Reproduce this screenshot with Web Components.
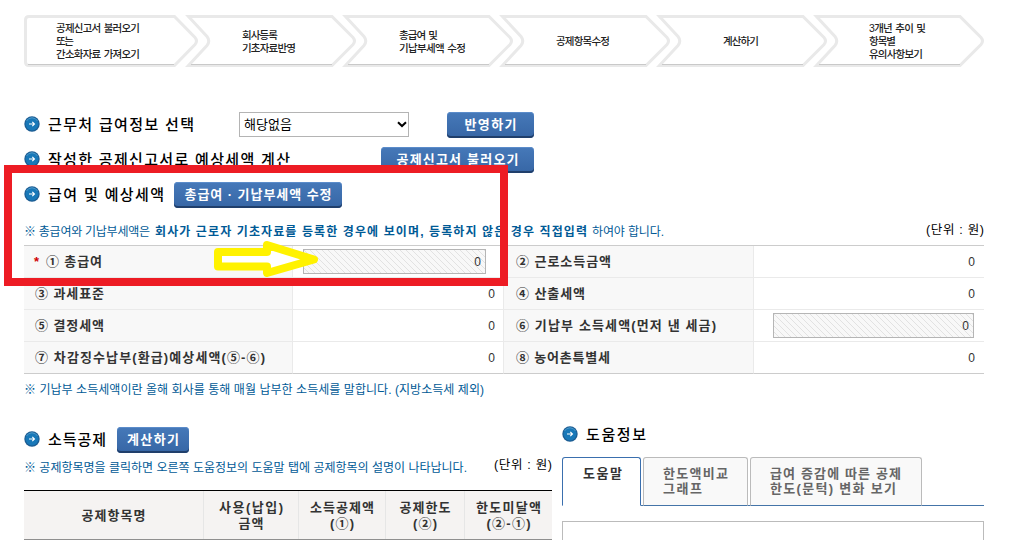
<!DOCTYPE html>
<html lang="ko">
<head>
<meta charset="utf-8">
<title>예상세액 계산하기</title>
<style>
  body {
    margin: 0;
    background: #fff;
    color: #000;
    font: 12px/16px "Liberation Sans", "Noto Sans CJK KR", sans-serif;
  }
</style>
</head>
<body>
<tax-page></tax-page>

<script>
// Attach an open shadow root filled with the given markup
function shadow(el, html) {
  const template = document.createElement("template");
  template.innerHTML = html;
  el.attachShadow({ mode: "open" });
  el.shadowRoot.appendChild(template.content.cloneNode(true));
}

// One arrow of the process bar
class ProcessStep extends HTMLElement {
  connectedCallback() {
    const first = this.hasAttribute("first");
    const outline = first
      ? "M5 1.5H150.5L171 22.5Q174 26 171 29.5L150.5 50.5H5Q1.5 50.5 1.5 47V5Q1.5 1.5 5 1.5Z"
      : "M3.5 1.5H147L168 22.5Q171 26 168 29.5L147 50.5H3.5L22 30.5Q25.500 26 22 21.500Z";
    shadow(this, `
      <style>
        :host { display: grid; height: 52px; align-items: center; color: #222; }
        svg, .label { grid-area: 1 / 1; }
        svg { width: 100%; height: 52px; overflow: visible; }
        .label {
          display: flex;
          flex-direction: column;
          align-items: flex-start;
          padding: 1px 0 0 ${this.getAttribute("indent")}px;
          font-size: 10.500px;
          line-height: 13px;
          font-weight: 500;
          word-spacing: 1px;
        }
      </style>
      <svg>
        <path d="${outline}" fill="#fff" stroke="#e9e9e9" stroke-width="3"/>
        <path d="M${first ? 4 : 6} 49.500H${first ? 150 : 147}" stroke="#c9c9c9"/>
      </svg>
      <div class="label"><slot></slot></div>
    `);
  }
}

// Section title with the round blue bullet
class SectionTitle extends HTMLElement {
  connectedCallback() {
    shadow(this, `
      <style>
        :host { display: flex; align-items: center; height: 35px; }
        svg { flex: none; margin: -1px 8px 0 0; }
        .text { font-size: 15px; line-height: 20px; font-weight: 500; }
        .extra { display: flex; align-items: center; flex: 1; }
      </style>
      <svg width="16" height="16" viewBox="0 0 16 16">
        <circle cx="8" cy="8" r="7.700" fill="#1c5c92"/>
        <circle cx="8" cy="8" r="6.500" fill="#1878b8"/>
        <path d="M2.500 5A6.300 6.300 0 0 1 13.500 5" fill="none" stroke="#4f9bcb"/>
        <path d="M5 8H10.500M8.300 5.800L10.500 8L8.300 10.200" fill="none" stroke="#fff" stroke-width="1.100"/>
      </svg>
      <div class="text"><slot></slot></div>
      <div class="extra"><slot name="extra"></slot></div>
    `);
  }
}

class BlueButton extends HTMLElement {
  connectedCallback() {
    shadow(this, `
      <style>
        :host { display: block; flex: none; }
        button {
          display: flex;
          justify-content: center;
          width: 100%;
          height: 26px;
          padding: 4px 0 0;
          border: 0;
          border-radius: 4px;
          background: linear-gradient(#4679b9, #3766a5);
          box-shadow: inset 0 1px #5b8cca, inset 0 -2px #203f6b;
          color: #fff;
          font: bold 13px/17px "Liberation Sans", "Noto Sans CJK KR", sans-serif;
        }
      </style>
      <button type="button"><slot></slot></button>
    `);
  }
}

class SelectBox extends HTMLElement {
  connectedCallback() {
    shadow(this, `
      <style>
        :host {
          display: flex;
          align-items: center;
          justify-content: space-between;
          box-sizing: border-box;
          width: 170px;
          height: 25px;
          padding: 0 1px 0 4px;
          border: 1px solid #b4b4b4;
          background: #fff;
          font-size: 13px;
        }
      </style>
      <slot></slot>
      <svg width="10" height="7"><path d="M1 1.200L5 5L9 1.200" fill="none" stroke="#000" stroke-width="2"/></svg>
    `);
  }
}

// Line of blue help text, with an optional unit on the right
class NoteLine extends HTMLElement {
  connectedCallback() {
    shadow(this, `
      <style>
        :host { display: flex; justify-content: space-between; color: #005a96; }
        .text { display: flex; gap: 5px; padding-top: 1px; }
        .unit { color: #000; font-size: 12.500px; }
        ::slotted(b) { font-weight: bold; }
      </style>
      <div class="text"><slot></slot></div>
      <div class="unit"><slot name="unit"></slot></div>
    `);
  }
}

class AmountTable extends HTMLElement {
  connectedCallback() {
    shadow(this, `
      <style>
        :host {
          display: grid;
          grid-template-columns: 269px 211px 250px 230px;
          grid-auto-rows: 32px;
          border-top: 1px solid #ccc;
        }
      </style>
      <slot></slot>
    `);
  }
}

// Label cell and value cell of the amount table
class AmountItem extends HTMLElement {
  connectedCallback() {
    const field = this.getAttribute("field");
    const last = this.hasAttribute("last");
    const right = this.hasAttribute("right");
    shadow(this, `
      <style>
        :host { display: contents; }
        .label, .value {
          display: flex;
          align-items: center;
          box-sizing: border-box;
          border-bottom: 1px solid ${last ? "#ccc" : "#eaeaea"};
          border-right: 1px solid #eaeaea;
        }
        .label {
          padding: 0 0 0 ${right ? 12 : 11}px;
          background: #f8f8f8;
          color: #333;
          font-size: 13px;
          font-weight: bold;
        }
        .required { width: 12px; margin-left: -1px; color: #d00000; }
        .value { justify-content: flex-end; padding-right: 8px; color: #333; }
        .value span { padding-top: 1px; }
        :host([right]) .value { border-right: 0; padding-right: 9px; }
        :host([field]) .value { padding-right: 17px; }
        :host([field][right]) .value { padding-right: 10px; }
        .field {
          display: flex;
          align-items: center;
          justify-content: flex-end;
          box-sizing: border-box;
          width: ${field}px;
          height: 25px;
          padding-right: 4px;
          border: 1px solid #b5b5b5;
          background: repeating-linear-gradient(45deg, #f8f8f8 0 3.200px, #e2e2e2 3.200px 4.240px);
        }
      </style>
      <div class="label">
        ${this.hasAttribute("required") ? '<span class="required">*</span>' : ""}
        <slot></slot>
      </div>
      <div class="value">${field ? '<div class="field">0</div>' : "<span>0</span>"}</div>
    `);
  }
}

class DeductionHead extends HTMLElement {
  connectedCallback() {
    shadow(this, `
      <style>
        :host {
          display: grid;
          grid-template-columns: 180px 95px 87px 79px 87px;
          box-sizing: border-box;
          height: 50px;
          border-top: 1px solid #000;
          border-bottom: 1px solid #8f8f8f;
          background: #f5f3f2;
          color: #333;
          font-size: 13px;
          font-weight: bold;
        }
        ::slotted(div) {
          display: flex;
          flex-direction: column;
          align-items: center;
          justify-content: center;
          padding-top: 1px;
          border-right: 1px solid #e6e6e6;
        }
        ::slotted(div:last-child) { border-right: 0; }
      </style>
      <slot></slot>
    `);
  }
}

class TabItem extends HTMLElement {
  connectedCallback() {
    shadow(this, `
      <style>
        :host {
          display: flex;
          flex-direction: column;
          align-items: flex-start;
          box-sizing: border-box;
          height: 49px;
          padding: 8px 0 0 19px;
          border: 1px solid #bbb;
          border-bottom: 1px solid #4474a8;
          border-radius: 3px 3px 0 0;
          background: #f9f9f9;
          color: #666;
          font-size: 13px;
          line-height: 15px;
          font-weight: bold;
        }
        :host([active]) {
          padding-left: 20px;
          border-color: #3a6fae;
          border-bottom-color: #fff;
          background: #fff;
          color: #333;
        }
      </style>
      <slot></slot>
    `);
  }
}

// Red frame and yellow arrow drawn over the page
class MarkOverlay extends HTMLElement {
  connectedCallback() {
    shadow(this, `
      <style>
        :host { position: absolute; left: 4px; top: 165px; pointer-events: none; }
        svg { display: block; }
      </style>
      <svg width="504" height="121" viewBox="4 165 504 121">
        <path d="M218 252H267V245L314 259.500L267 273V266.500H218Z" fill="#fff"
          stroke="#fff200" stroke-width="8" stroke-linejoin="round"/>
        <rect x="8" y="169" width="496" height="113" fill="none" stroke="#ed1c24" stroke-width="8"/>
      </svg>
    `);
  }
}

class TaxPage extends HTMLElement {
  connectedCallback() {
    shadow(this, `
      <style>
        :host {
          display: block;
          position: relative;
          box-sizing: border-box;
          width: 1017px;
          height: 540px;
          padding: 15px 33px 0 24px;
          overflow: hidden;
        }
        .steps { display: grid; grid-template-columns: 161px repeat(4, 157px) 171px; margin-bottom: 40px; }
        .push { margin-left: auto; }
        .source select-box { margin-left: 45px; }
        .source, .load { width: 510px; }
        .pay-note { height: 22px; padding-top: 11px; }
        .prepaid-note { height: 23px; padding-top: 7px; }
        .columns { display: flex; gap: 10px; }
        .left { width: 528px; padding-top: 18px; }
        .right { width: 422px; padding-top: 13px; }
        .left note-line { height: 31px; padding-top: 2px; }
        /* the blue rule continues under the gaps and after the last tab */
        .tabs {
          display: grid;
          grid-template-columns: 79px 105px 172px 1fr;
          column-gap: 2px;
          margin-top: 5px;
          background: linear-gradient(#4474a8, #4474a8) 79px 100% / 343px 1px no-repeat;
        }
        .panel { height: 40px; margin-top: 15px; border: 1px solid #bbb; }
      </style>

      <div class="steps">
        <process-step first indent="32">
          <ko-text width="84">공제신고서 불러오기</ko-text>
          <ko-text width="18">또는</ko-text>
          <ko-text width="84">간소화자료 가져오기</ko-text>
        </process-step>
        <process-step indent="57">
          <ko-text width="36">회사등록</ko-text>
          <ko-text width="54">기초자료반영</ko-text>
        </process-step>
        <process-step indent="57">
          <ko-text width="39">총급여 및</ko-text>
          <ko-text width="67">기납부세액 수정</ko-text>
        </process-step>
        <process-step indent="57"><ko-text width="54">공제항목수정</ko-text></process-step>
        <process-step indent="67"><ko-text width="36">계산하기</ko-text></process-step>
        <process-step indent="56">
          <ko-text width="57">3개년 추이 및</ko-text>
          <ko-text width="27">항목별</ko-text>
          <ko-text width="54">유의사항보기</ko-text>
        </process-step>
      </div>

      <section-title class="source">
        <ko-text width="146">근무처 급여정보 선택</ko-text>
        <select-box slot="extra"><ko-text width="48">해당없음</ko-text></select-box>
        <blue-button slot="extra" class="push" style="width: 87px"><ko-text width="52">반영하기</ko-text></blue-button>
      </section-title>
      <section-title class="load">
        <ko-text width="242">작성한 공제신고서로 예상세액 계산</ko-text>
        <blue-button slot="extra" class="push" style="width: 153px"><ko-text width="122">공제신고서 불러오기</ko-text></blue-button>
      </section-title>
      <section-title>
        <ko-text width="116">급여 및 예상세액</ko-text>
        <blue-button slot="extra" style="width: 168px; margin-left: 10px"><ko-text width="147">총급여 · 기납부세액 수정</ko-text></blue-button>
      </section-title>

      <note-line class="pay-note">
        <ko-text width="126">※ 총급여와 기납부세액은</ko-text>
        <b><ko-text width="432">회사가 근로자 기초자료를 등록한 경우에 보이며, 등록하지 않은 경우 직접입력</ko-text></b>
        <ko-text width="72">하여야 합니다.</ko-text>
        <ko-text slot="unit" width="58" style="margin-top: -1px">(단위 : 원)</ko-text>
      </note-line>

      <amount-table>
        <amount-item required field="183"><ko-text width="56">① 총급여</ko-text></amount-item>
        <amount-item right><ko-text width="95">② 근로소득금액</ko-text></amount-item>
        <amount-item><ko-text width="69">③ 과세표준</ko-text></amount-item>
        <amount-item right><ko-text width="69">④ 산출세액</ko-text></amount-item>
        <amount-item><ko-text width="69">⑤ 결정세액</ko-text></amount-item>
        <amount-item right field="201"><ko-text width="200">⑥ 기납부 소득세액(먼저 낸 세금)</ko-text></amount-item>
        <amount-item last><ko-text width="230">⑦ 차감징수납부(환급)예상세액(⑤-⑥)</ko-text></amount-item>
        <amount-item last right><ko-text width="94">⑧ 농어촌특별세</ko-text></amount-item>
      </amount-table>

      <note-line class="prepaid-note">
        <ko-text width="460">※ 기납부 소득세액이란 올해 회사를 통해 매월 납부한 소득세를 말합니다. (지방소득세 제외)</ko-text>
      </note-line>

      <div class="columns">
        <div class="left">
          <section-title>
            <ko-text width="58">소득공제</ko-text>
            <blue-button slot="extra" style="width: 72px; margin-left: 11px"><ko-text width="52">계산하기</ko-text></blue-button>
          </section-title>
          <note-line>
            <ko-text width="443">※ 공제항목명을 클릭하면 오른쪽 도움정보의 도움말 탭에 공제항목의 설명이 나타납니다.</ko-text>
            <ko-text slot="unit" width="58" style="margin-top: -2px">(단위 : 원)</ko-text>
          </note-line>
          <deduction-head>
            <div><ko-text width="64">공제항목명</ko-text></div>
            <div><ko-text width="64">사용(납입)</ko-text><ko-text width="25">금액</ko-text></div>
            <div><ko-text width="64">소득공제액</ko-text><ko-text width="24">(①)</ko-text></div>
            <div><ko-text width="51">공제한도</ko-text><ko-text width="24">(②)</ko-text></div>
            <div><ko-text width="65">한도미달액</ko-text><ko-text width="44">(②-①)</ko-text></div>
          </deduction-head>
        </div>
        <div class="right">
          <section-title><ko-text width="60">도움정보</ko-text></section-title>
          <div class="tabs">
            <tab-item active><ko-text width="39">도움말</ko-text></tab-item>
            <tab-item><ko-text width="65">한도액비교</ko-text><ko-text width="39">그래프</ko-text></tab-item>
            <tab-item><ko-text width="131">급여 증감에 따른 공제</ko-text><ko-text width="126">한도(문턱) 변화 보기</ko-text></tab-item>
          </div>
          <div class="panel"></div>
        </div>
      </div>
      <mark-overlay></mark-overlay>
    `);
  }
}

// Text tracked out (or in) so that the line has the given width
class KoText extends HTMLElement {
  connectedCallback() {
    shadow(this, `
      <style>
        :host { display: block; flex: none; width: max-content; white-space: nowrap; }
      </style>
      <span><slot></slot></span>
    `);
    const width = Number(this.getAttribute("width"));
    const span = this.shadowRoot.querySelector("span");
    const natural = span.getBoundingClientRect().width;
    const count = this.textContent.length;
    const spacing = (width - natural) / (count - 1 || 1);
    span.style.letterSpacing = spacing.toFixed(3) + "px";
    span.style.marginRight = (-spacing).toFixed(3) + "px";
  }
}

customElements.define("tax-page", TaxPage);
customElements.define("process-step", ProcessStep);
customElements.define("section-title", SectionTitle);
customElements.define("blue-button", BlueButton);
customElements.define("select-box", SelectBox);
customElements.define("note-line", NoteLine);
customElements.define("amount-table", AmountTable);
customElements.define("amount-item", AmountItem);
customElements.define("deduction-head", DeductionHead);
customElements.define("tab-item", TabItem);
customElements.define("mark-overlay", MarkOverlay);
// last, as it measures text inside all the others
customElements.define("ko-text", KoText);
</script>
</body>
</html>
